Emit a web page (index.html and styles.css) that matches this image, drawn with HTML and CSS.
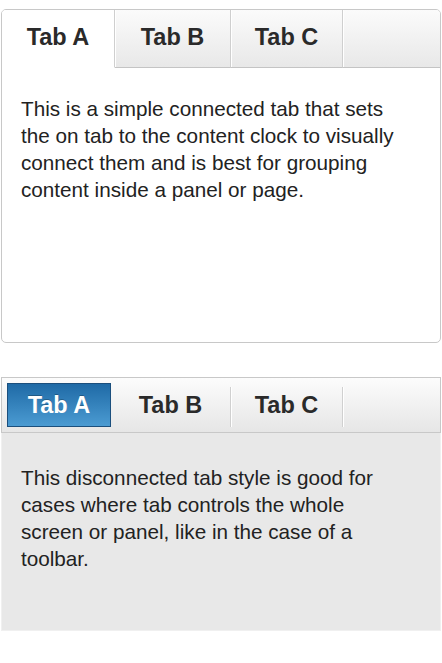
FILE: index.html
```html
<!DOCTYPE html>
<html>
<head>
<meta charset="utf-8">
<link rel="stylesheet" href="styles.css">
</head>
<body>
<div class="panel connected">
  <div class="tabbar">
    <div class="tab tab-a active">Tab A</div>
    <div class="tab tab-b">Tab B</div>
    <div class="tab tab-c">Tab C</div>
    <div class="tab-fill"></div>
  </div>
  <div class="content">
    <p>This is a simple connected tab that sets the on tab to the content clock to visually connect them and is best for grouping content inside a panel or page.</p>
  </div>
</div>

<div class="panel disconnected">
  <div class="tabbar">
    <div class="tab tab-a active">Tab A</div>
    <div class="tab tab-b">Tab B</div>
    <div class="tab tab-c">Tab C</div>
    <div class="tab-fill"></div>
  </div>
  <div class="content">
    <p>This disconnected tab style is good for cases where tab controls the whole screen or panel, like in the case of a toolbar.</p>
  </div>
</div>
</body>
</html>
```
FILE: styles.css
```css
* { box-sizing: border-box; }
html, body { margin: 0; background: #fff; }
body {
  padding: 9px 2px 0 1px;
  font-family: "Liberation Sans", Arial, sans-serif;
  color: #222;
}
p { margin: 0; }

.panel { width: 440px; }

/* connected */
.connected {
  height: 334px;
  border: 1px solid #c8c8c8;
  border-radius: 5px;
  display: flex;
  flex-direction: column;
  overflow: hidden;
}
.connected .tabbar {
  display: flex;
  height: 58px;
  flex: none;
}
.tab {
  display: flex;
  align-items: center;
  justify-content: center;
  font-size: 23.5px;
  font-weight: bold;
  color: #2a2a2a;
}
.connected .tab {
  background: linear-gradient(#fbfbfb, #e8e8e8);
  border-right: 1px solid #cfcfcf;
  border-bottom: 1px solid #c4c4c4;
  box-shadow: inset 1px 0 0 #fff;
  padding-bottom: 2px;
}
.connected .tab.active {
  background: #fff;
  border-bottom-color: #fff;
  box-shadow: none;
}
.connected .tab-a { width: 113px; }
.connected .tab-b { width: 116px; }
.connected .tab-c { width: 112px; }
.connected .tab-fill {
  flex: 1;
  background: linear-gradient(#fbfbfb, #e8e8e8);
  border-bottom: 1px solid #c4c4c4;
  box-shadow: inset 1px 0 0 #fff;
}
.content {
  font-size: 20.7px;
  line-height: 27px;
  color: #222;
}
.connected .content {
  padding: 27px 30px 0 19px;
}

/* disconnected */
.disconnected {
  margin-top: 34px;
  height: 254px;
  background: #e8e8e8;
  border: 1px solid #f0f0f0;
  border-top: none;
}
.disconnected .tabbar {
  display: flex;
  height: 56px;
  padding: 5px 0 5px 5px;
  background: linear-gradient(#fcfcfc, #e6e6e6);
  border: 1px solid #c8c8c8;
  margin: 0 -1px;
}
.disconnected .tab {
  height: 44px;
}
.disconnected .tab.active {
  width: 104px;
  color: #fff;
  background: linear-gradient(#1f6aa6, #4b9bd2);
  border: 1px solid #1b4f7d;
  text-shadow: 0 -1px 0 rgba(0,0,0,0.25);
  font-weight: bold;
}
.disconnected .tab-b {
  width: 120px;
  border-right: 1px solid #d0d0d0;
  box-shadow: 1px 0 0 #fff;
  margin: 4px 0 0;
  height: 40px;
  padding-bottom: 3px;
}
.disconnected .tab-c {
  width: 112px;
  border-right: 1px solid #d0d0d0;
  box-shadow: 1px 0 0 #fff;
  margin: 4px 0 0;
  height: 40px;
  padding-bottom: 3px;
}
.disconnected .content {
  padding: 31px 30px 0 19px;
}
```
